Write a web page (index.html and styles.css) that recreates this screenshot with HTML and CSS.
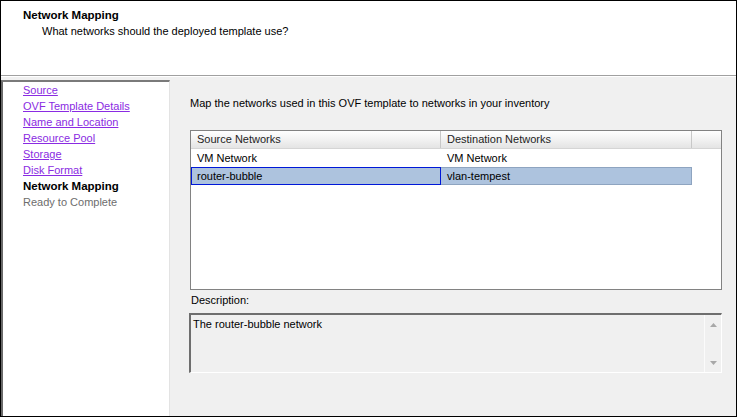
FILE: index.html
```html
<!DOCTYPE html>
<html>
<head>
<meta charset="utf-8">
<link rel="stylesheet" href="styles.css">
</head>
<body>
<div class="win">
  <div class="header">
    <div class="title">Network Mapping</div>
    <div class="subtitle">What networks should the deployed template use?</div>
  </div>
  <div class="main">
    <div class="nav">
      <a class="link">Source</a>
      <a class="link">OVF Template Details</a>
      <a class="link">Name and Location</a>
      <a class="link">Resource Pool</a>
      <a class="link">Storage</a>
      <a class="link">Disk Format</a>
      <span class="current">Network Mapping</span>
      <span class="future">Ready to Complete</span>
    </div>
    <div class="content">
      <div class="intro">Map the networks used in this OVF template to networks in your inventory</div>
      <div class="table">
        <div class="thead">
          <div class="th c1">Source Networks</div>
          <div class="th c2">Destination Networks</div>
          <div class="th c3"></div>
        </div>
        <div class="row">
          <div class="td c1">VM Network</div>
          <div class="td c2">VM Network</div>
        </div>
        <div class="row sel">
          <div class="td c1 focus">router-bubble</div>
          <div class="td c2">vlan-tempest</div>
        </div>
      </div>
      <div class="desc-label">Description:</div>
      <div class="desc">
        <div class="desc-text">The router-bubble network</div>
        <div class="scroll">
          <svg width="7" height="4" viewBox="0 0 7 4"><path d="M3.5 0 L7 4 L0 4 Z" fill="#a8a8a8"/></svg>
          <svg width="7" height="4" viewBox="0 0 7 4"><path d="M0 0 L7 0 L3.5 4 Z" fill="#a8a8a8"/></svg>
        </div>
      </div>
    </div>
  </div>
</div>
</body>
</html>
```

FILE: styles.css
```css
html, body {
  margin: 0;
  padding: 0;
  background: #ffffff;
}
body {
  font-family: "Liberation Sans", Arial, sans-serif;
  font-size: 11px;
  color: #000;
}
.win {
  width: 737px;
  height: 417px;
  box-sizing: border-box;
  border: 1px solid #000;
  display: flex;
  flex-direction: column;
  background: #f0f0f0;
  overflow: hidden;
}
.header {
  height: 75px;
  background: #fff;
  border-bottom: 1px solid #a0a0a0;
  padding: 7px 0 0 22px;
  box-sizing: border-box;
  flex: none;
}
.title {
  font-weight: bold;
  font-size: 11.5px;
  line-height: 14px;
}
.subtitle {
  margin-top: 2px;
  padding-left: 19px;
  line-height: 14px;
}
.main {
  flex: 1;
  display: flex;
  padding-top: 3px;
  min-height: 0;
  border-top: 1px solid #ffffff;
}
.nav {
  width: 169px;
  flex: none;
  background: #fff;
  border-top: 2px solid #7a7a7a;
  border-left: 2px solid #696969;
  border-right: 1px solid #e3e3e3;
  display: flex;
  flex-direction: column;
  padding: 0 0 0 20px;
  box-sizing: border-box;
}
.nav a, .nav span {
  line-height: 16px;
  height: 16px;
  white-space: nowrap;
}
.link {
  color: #8a2be2;
  text-decoration: underline;
}
.current {
  font-weight: bold;
  font-size: 11.5px;
}
.future {
  color: #6d6d6d;
}
.content {
  flex: 1;
  padding: 16px 15px 0 19px;
  display: flex;
  flex-direction: column;
}
.intro {
  line-height: 14px;
  padding-left: 1px;
}
.table {
  margin-top: 20px;
  margin-left: 1px;
  height: 160px;
  background: #fff;
  border: 1px solid #828282;
  box-sizing: border-box;
}
.thead {
  display: flex;
  height: 18px;
  background: linear-gradient(#ffffff, #f2f2f2 50%, #e4e4e4);
  border-bottom: 1px solid #d5d5d5;
  box-sizing: border-box;
}
.th {
  line-height: 17px;
  padding-left: 6px;
  box-sizing: border-box;
  border-right: 1px solid #c8c8c8;
  color: #1e1e1e;
}
.c1 { width: 250px; }
.c2 { width: 251px; }
.c3 { width: 29px; border-right: none; }
.row {
  display: flex;
  height: 18px;
  width: 501px;
}
.td {
  line-height: 18px;
  padding-left: 6px;
  box-sizing: border-box;
}
.sel {
  background: #adc3de;
}
.sel .c2 {
  border: 1px solid #8ea4c0;
  border-left: none;
  line-height: 16px;
}
.focus {
  border: 1px solid #0018d8;
  line-height: 16px;
  padding-left: 5px;
}
.desc-label {
  margin-top: 3px;
  line-height: 14px;
  padding-left: 2px;
}
.desc {
  margin-top: 6px;
  height: 60px;
  display: flex;
  border-top: 2px solid #6e6e6e;
  border-left: 2px solid #6e6e6e;
  border-right: 1px solid #ffffff;
  border-bottom: 1px solid #ffffff;
  box-sizing: border-box;
  background: #f0f0f0;
}
.desc-text {
  flex: 1;
  padding: 2px 0 0 2px;
  line-height: 14px;
}
.scroll {
  width: 17px;
  border-left: 1px solid #fbfbfb;
  background: #f0f0f0;
  display: flex;
  flex-direction: column;
  justify-content: space-between;
  align-items: center;
  padding: 8px 0 7px;
  box-sizing: border-box;
}
```
